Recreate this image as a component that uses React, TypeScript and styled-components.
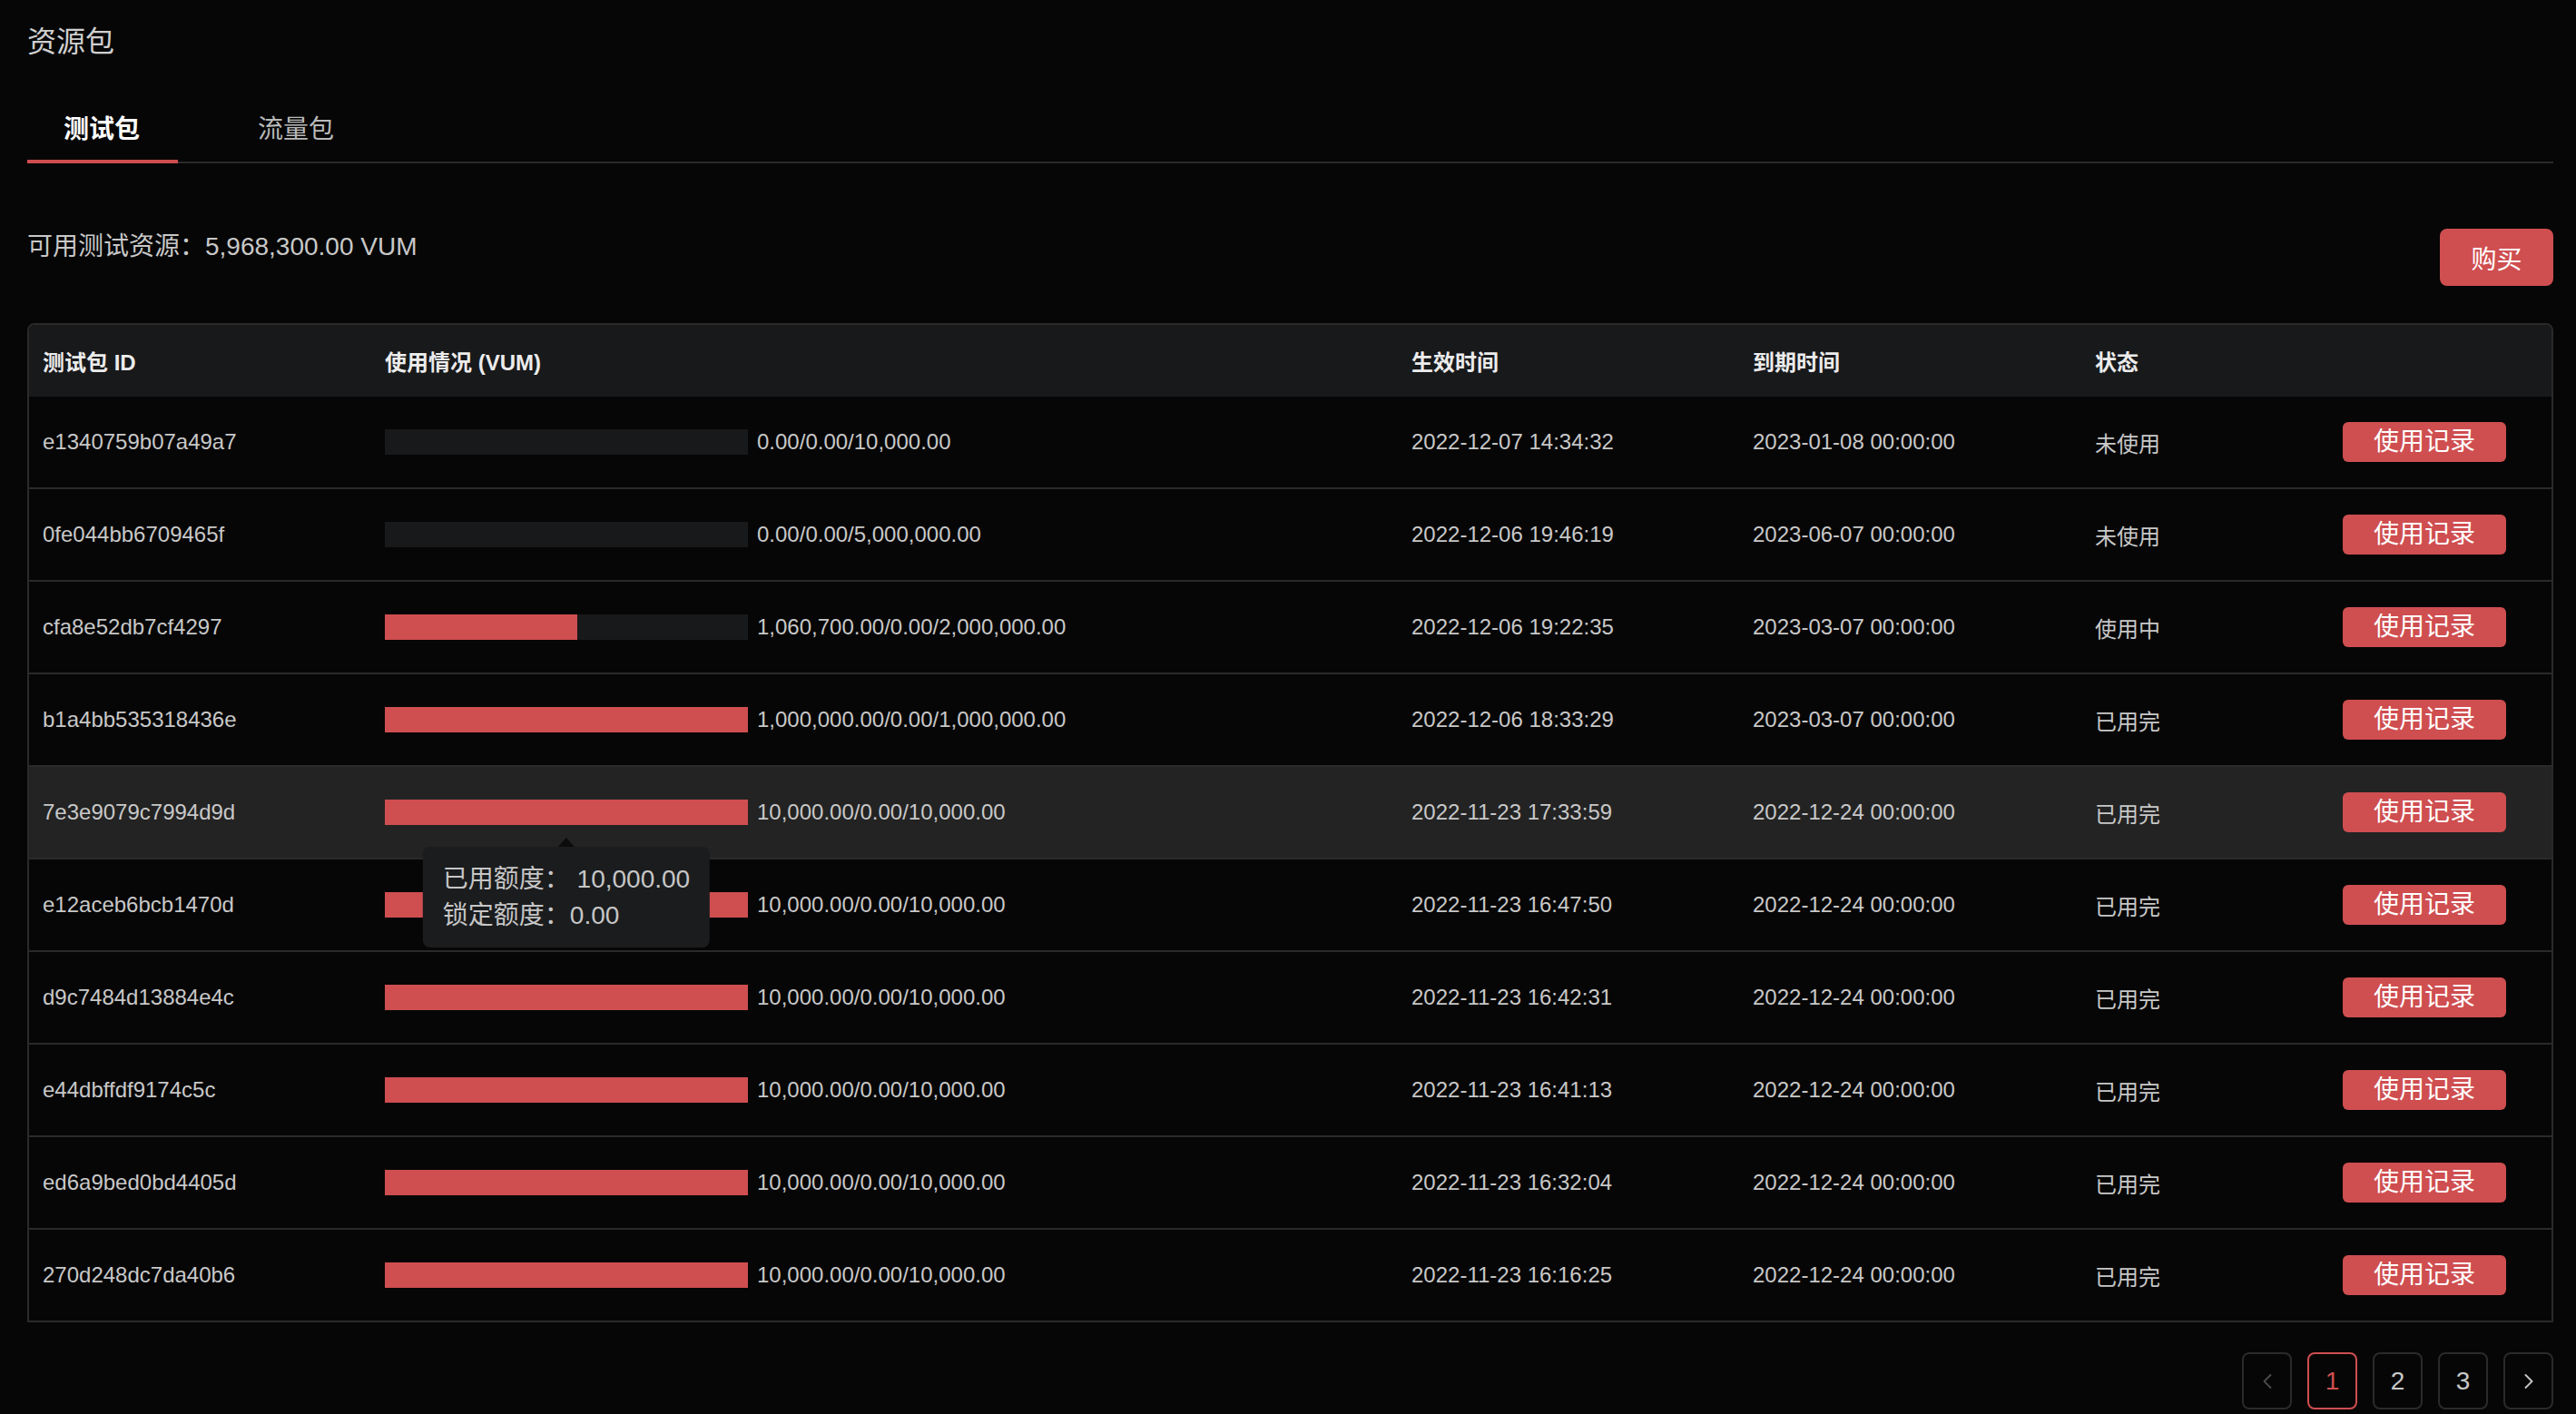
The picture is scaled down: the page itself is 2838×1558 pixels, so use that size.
import * as React from 'react';
import styled, { createGlobalStyle } from 'styled-components';
import { ChevronLeft, ChevronRight } from 'lucide-react';

const RED = '#cf4e50';
const LINE = '#2a2a2a';

const GlobalStyle = createGlobalStyle`
  html, body {
    margin: 0;
    padding: 0;
    background: #060606;
  }
  body {
    font-family: "Liberation Sans", "Noto Sans CJK SC", Arial, sans-serif;
    color: #c8c8c8;
  }
  * {
    box-sizing: border-box;
  }
`;

const Page = styled.main`
  padding: 22px 25px 6px 30px;
  min-height: 100vh;
  display: flex;
  flex-direction: column;
`;

const PageTitle = styled.h1`
  margin: 0;
  font-size: 32px;
  line-height: 48px;
  font-weight: normal;
  color: #cfcfcf;
`;

const TabBar = styled.nav`
  margin-top: 53px;
  display: flex;
  gap: 48px;
  border-bottom: 2px solid ${LINE};
`;

const Tab = styled.button<{ $active?: boolean }>`
  position: relative;
  background: none;
  border: none;
  padding: 0 42px 15px 40px;
  font-family: inherit;
  font-size: 28px;
  line-height: 40px;
  font-weight: ${(p) => (p.$active ? 'bold' : 'normal')};
  color: ${(p) => (p.$active ? '#ffffff' : '#b9b9b9')};
  cursor: pointer;

  &::after {
    content: '';
    display: ${(p) => (p.$active ? 'block' : 'none')};
    position: absolute;
    left: 0;
    right: 0;
    bottom: -2px;
    height: 4px;
    background: ${RED};
  }
`;

const SummaryRow = styled.div`
  margin-top: 72px;
  display: flex;
  justify-content: space-between;
  align-items: flex-start;
`;

const Summary = styled.div`
  font-size: 28px;
  line-height: 40px;
  color: #c8c8c8;
`;

const PrimaryButton = styled.button`
  width: 125px;
  height: 63px;
  border: none;
  border-radius: 8px;
  background: ${RED};
  color: #ffffff;
  font-family: inherit;
  font-size: 28px;
  cursor: pointer;
`;

const Table = styled.div`
  margin-top: 41px;
  border: 2px solid ${LINE};
  border-radius: 8px 8px 0 0;
`;

const grid = `
  display: grid;
  grid-template-columns: 377px 1131px 376px 377px 1fr 245px;
  align-items: center;
`;

const HeadRow = styled.div`
  ${grid}
  height: 79px;
  background: #18191b;
  border-radius: 6px 6px 0 0;
`;

const HeadCell = styled.div`
  padding-left: 15px;
  font-size: 24px;
  font-weight: bold;
  color: #ececec;
`;

const Row = styled.div<{ $hover?: boolean }>`
  ${grid}
  height: 102px;
  background: ${(p) => (p.$hover ? '#232323' : '#060606')};
  border-bottom: 2px solid ${LINE};

  &:last-child {
    height: 100px;
    border-bottom: none;
  }
`;

const Cell = styled.div`
  padding-left: 15px;
  font-size: 24px;
  color: #c8c8c8;
  white-space: nowrap;
`;

const UsageCell = styled(Cell)`
  display: flex;
  align-items: center;
  gap: 10px;
`;

const BarWrap = styled.div`
  position: relative;
`;

const Bar = styled.div`
  width: 400px;
  height: 28px;
  background: #18191b;
`;

const BarFill = styled.div`
  height: 100%;
  background: ${RED};
`;

const Tooltip = styled.div`
  position: absolute;
  z-index: 5;
  top: 52px;
  left: 50%;
  transform: translateX(-50%);
  padding: 16px 22px 15px;
  background: #1b1c1e;
  border-radius: 8px;
  font-size: 28px;
  line-height: 40px;
  color: #c6c6c6;
  white-space: pre;

  &::before {
    content: '';
    position: absolute;
    top: -10px;
    left: 50%;
    margin-left: -9px;
    border-left: 9px solid transparent;
    border-right: 9px solid transparent;
    border-bottom: 10px solid #0c0c0c;
  }
`;

const ActionCell = styled.div`
  padding-left: 15px;
`;

const RecordButton = styled.button`
  width: 180px;
  height: 44px;
  border: none;
  border-radius: 6px;
  background: ${RED};
  color: #ffffff;
  font-family: inherit;
  font-size: 28px;
  line-height: 44px;
  padding: 0;
  cursor: pointer;
`;

const Pager = styled.div`
  margin-top: 33px;
  display: flex;
  justify-content: flex-end;
  gap: 17px;
`;

const PageItem = styled.button<{ $active?: boolean; $muted?: boolean }>`
  width: 55px;
  height: 63px;
  display: flex;
  align-items: center;
  justify-content: center;
  background: transparent;
  border: 2px solid ${(p) => (p.$active ? RED : LINE)};
  border-radius: 8px;
  font-family: inherit;
  font-size: 28px;
  color: ${(p) => (p.$active ? RED : p.$muted ? '#4a4a4a' : '#c8c8c8')};
  padding: 0;
  cursor: pointer;
`;

type Pack = {
  id: string;
  used: number;
  total: number;
  usage: string;
  start: string;
  end: string;
  status: string;
};

const packs: Pack[] = [
  { id: 'e1340759b07a49a7', used: 0, total: 10000, usage: '0.00/0.00/10,000.00', start: '2022-12-07 14:34:32', end: '2023-01-08 00:00:00', status: '未使用' },
  { id: '0fe044bb6709465f', used: 0, total: 5000000, usage: '0.00/0.00/5,000,000.00', start: '2022-12-06 19:46:19', end: '2023-06-07 00:00:00', status: '未使用' },
  { id: 'cfa8e52db7cf4297', used: 1060700, total: 2000000, usage: '1,060,700.00/0.00/2,000,000.00', start: '2022-12-06 19:22:35', end: '2023-03-07 00:00:00', status: '使用中' },
  { id: 'b1a4bb535318436e', used: 1000000, total: 1000000, usage: '1,000,000.00/0.00/1,000,000.00', start: '2022-12-06 18:33:29', end: '2023-03-07 00:00:00', status: '已用完' },
  { id: '7e3e9079c7994d9d', used: 10000, total: 10000, usage: '10,000.00/0.00/10,000.00', start: '2022-11-23 17:33:59', end: '2022-12-24 00:00:00', status: '已用完' },
  { id: 'e12aceb6bcb1470d', used: 10000, total: 10000, usage: '10,000.00/0.00/10,000.00', start: '2022-11-23 16:47:50', end: '2022-12-24 00:00:00', status: '已用完' },
  { id: 'd9c7484d13884e4c', used: 10000, total: 10000, usage: '10,000.00/0.00/10,000.00', start: '2022-11-23 16:42:31', end: '2022-12-24 00:00:00', status: '已用完' },
  { id: 'e44dbffdf9174c5c', used: 10000, total: 10000, usage: '10,000.00/0.00/10,000.00', start: '2022-11-23 16:41:13', end: '2022-12-24 00:00:00', status: '已用完' },
  { id: 'ed6a9bed0bd4405d', used: 10000, total: 10000, usage: '10,000.00/0.00/10,000.00', start: '2022-11-23 16:32:04', end: '2022-12-24 00:00:00', status: '已用完' },
  { id: '270d248dc7da40b6', used: 10000, total: 10000, usage: '10,000.00/0.00/10,000.00', start: '2022-11-23 16:16:25', end: '2022-12-24 00:00:00', status: '已用完' },
];

const HOVERED = 4;

const App: React.FC = () => (
  <>
    <GlobalStyle />
    <Page>
      <PageTitle>资源包</PageTitle>
      <TabBar>
        <Tab $active>测试包</Tab>
        <Tab>流量包</Tab>
      </TabBar>

      <SummaryRow>
        <Summary>可用测试资源：5,968,300.00 VUM</Summary>
        <PrimaryButton>购买</PrimaryButton>
      </SummaryRow>

      <Table>
        <HeadRow>
          <HeadCell>测试包 ID</HeadCell>
          <HeadCell>使用情况 (VUM)</HeadCell>
          <HeadCell>生效时间</HeadCell>
          <HeadCell>到期时间</HeadCell>
          <HeadCell>状态</HeadCell>
          <HeadCell />
        </HeadRow>
        {packs.map((p, i) => (
          <Row key={p.id} $hover={i === HOVERED}>
            <Cell>{p.id}</Cell>
            <UsageCell>
              <BarWrap>
                <Bar>
                  <BarFill style={{ width: `${(p.used / p.total) * 100}%` }} />
                </Bar>
                {i === HOVERED && (
                  <Tooltip>
                    {'已用额度： 10,000.00\n锁定额度：0.00'}
                  </Tooltip>
                )}
              </BarWrap>
              {p.usage}
            </UsageCell>
            <Cell>{p.start}</Cell>
            <Cell>{p.end}</Cell>
            <Cell>{p.status}</Cell>
            <ActionCell>
              <RecordButton>使用记录</RecordButton>
            </ActionCell>
          </Row>
        ))}
      </Table>

      <Pager>
        <PageItem $muted>
          <ChevronLeft size={28} strokeWidth={1.6} />
        </PageItem>
        <PageItem $active>1</PageItem>
        <PageItem>2</PageItem>
        <PageItem>3</PageItem>
        <PageItem>
          <ChevronRight size={28} strokeWidth={1.6} />
        </PageItem>
      </Pager>
    </Page>
  </>
);

export default App;
